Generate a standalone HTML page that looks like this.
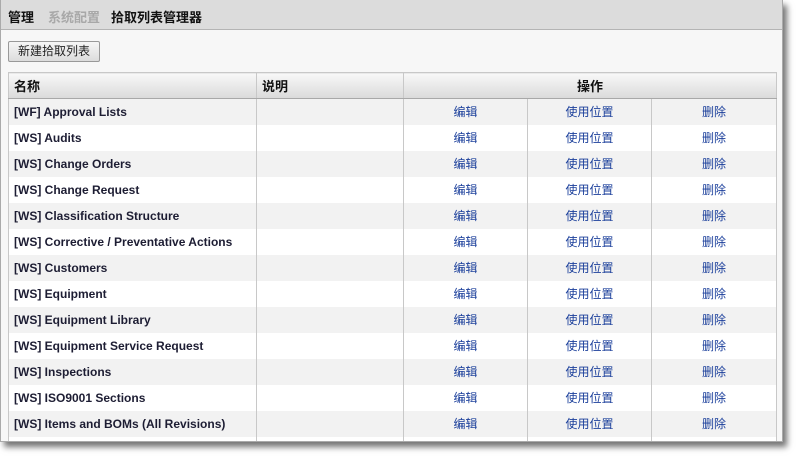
<!DOCTYPE html>
<html><head><meta charset="utf-8"><style>
*{margin:0;padding:0;box-sizing:border-box}
body{width:799px;height:459px;background:#fff;font-family:"Liberation Sans","Noto Sans CJK SC",sans-serif;position:relative;overflow:hidden}
#win{position:absolute;left:0;top:0;width:783px;height:442px;background:#f7f7f7;border:1px solid #aaa;border-top:none;box-shadow:4px 5px 6px rgba(0,0,0,.55);overflow:hidden}
#top{height:30px;background:#dcdcdc;border-bottom:1px solid #b4b4b4;font-size:13px;font-weight:bold;padding:7px 0 0 7px;color:#111}
#top span{margin-right:14px}
#top span+span{margin-right:11px}
#top .g{color:#a8a8a8}
#btn{position:absolute;left:7px;top:41px;width:92px;height:21px;border:1px solid #999;border-radius:2px;background:linear-gradient(#f6f6f6,#dcdcdc);font-size:12px;text-align:center;line-height:19px;color:#222}
table{position:absolute;left:7px;top:72px;width:768px;border-collapse:collapse;font-size:12px;table-layout:fixed}
th{height:26px;background:linear-gradient(#f8f8f8,#dadada);border:1px solid #c8c8c8;border-bottom:1px solid #a8a8a8;text-align:left;padding-left:5px;font-size:13px;color:#111}
td{height:26px;border-left:1px solid #c8c8c8;border-right:1px solid #c8c8c8;padding-left:5px;font-weight:bold;color:#1d1d33}
tr:nth-child(odd) td{background:#f2f2f2}
tr:nth-child(even) td{background:#fff}
td.a{text-align:center;color:#1b3f9b;font-weight:normal;padding:0}
</style></head><body>
<div id="win">
<div id="top"><span>管理</span><span class="g">系统配置</span><span>拾取列表管理器</span></div>
<div id="btn">新建拾取列表</div>
<table>
<colgroup><col style="width:248px"><col style="width:147px"><col style="width:124px"><col style="width:124px"><col style="width:125px"></colgroup>
<thead><tr><th>名称</th><th>说明</th><th colspan="3" style="text-align:center;padding:0">操作</th></tr></thead>
<tbody>
<tr><td>[WF] Approval Lists</td><td></td><td class="a">编辑</td><td class="a">使用位置</td><td class="a">删除</td></tr>
<tr><td>[WS] Audits</td><td></td><td class="a">编辑</td><td class="a">使用位置</td><td class="a">删除</td></tr>
<tr><td>[WS] Change Orders</td><td></td><td class="a">编辑</td><td class="a">使用位置</td><td class="a">删除</td></tr>
<tr><td>[WS] Change Request</td><td></td><td class="a">编辑</td><td class="a">使用位置</td><td class="a">删除</td></tr>
<tr><td>[WS] Classification Structure</td><td></td><td class="a">编辑</td><td class="a">使用位置</td><td class="a">删除</td></tr>
<tr><td>[WS] Corrective / Preventative Actions</td><td></td><td class="a">编辑</td><td class="a">使用位置</td><td class="a">删除</td></tr>
<tr><td>[WS] Customers</td><td></td><td class="a">编辑</td><td class="a">使用位置</td><td class="a">删除</td></tr>
<tr><td>[WS] Equipment</td><td></td><td class="a">编辑</td><td class="a">使用位置</td><td class="a">删除</td></tr>
<tr><td>[WS] Equipment Library</td><td></td><td class="a">编辑</td><td class="a">使用位置</td><td class="a">删除</td></tr>
<tr><td>[WS] Equipment Service Request</td><td></td><td class="a">编辑</td><td class="a">使用位置</td><td class="a">删除</td></tr>
<tr><td>[WS] Inspections</td><td></td><td class="a">编辑</td><td class="a">使用位置</td><td class="a">删除</td></tr>
<tr><td>[WS] ISO9001 Sections</td><td></td><td class="a">编辑</td><td class="a">使用位置</td><td class="a">删除</td></tr>
<tr><td>[WS] Items and BOMs (All Revisions)</td><td></td><td class="a">编辑</td><td class="a">使用位置</td><td class="a">删除</td></tr>
<tr><td></td><td></td><td class="a"></td><td class="a"></td><td class="a"></td></tr>
</tbody></table>
</div>
</body></html>
